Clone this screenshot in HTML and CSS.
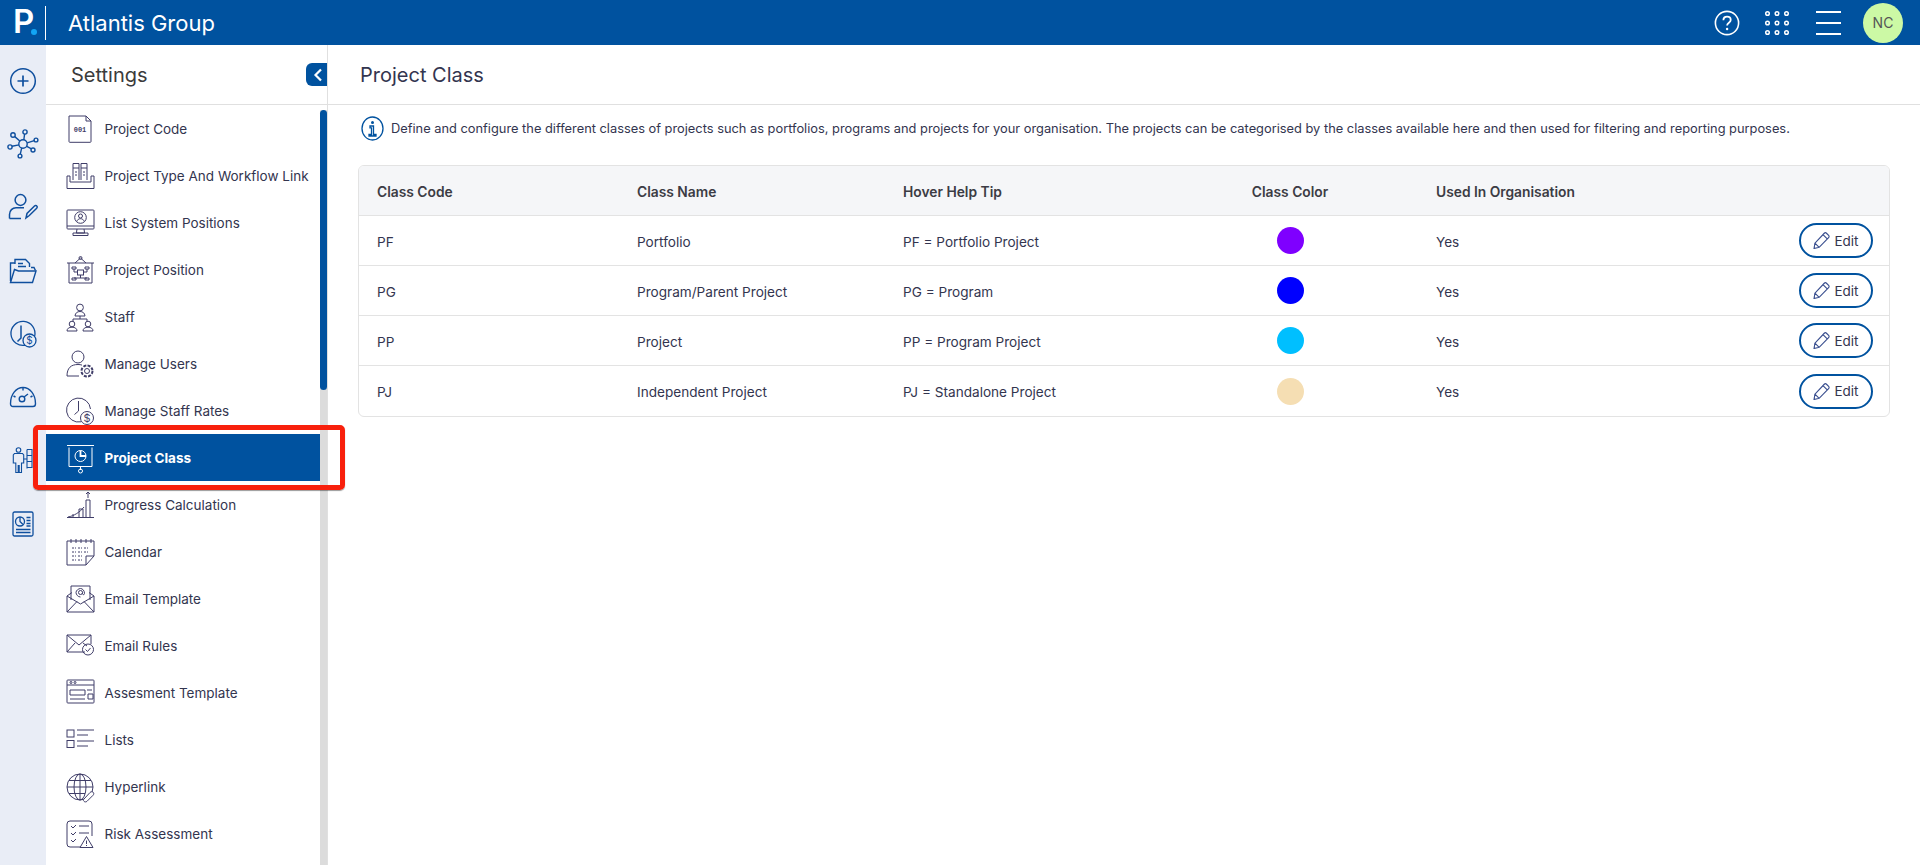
FILE: index.html
```html
<!DOCTYPE html>
<html lang="en">
<head>
<meta charset="utf-8">
<title>Project Class</title>
<link rel="stylesheet" href="styles.css">
</head>
<body>
<svg class="defs" width="0" height="0" aria-hidden="true">
  <symbol id="pencil" viewBox="0 0 16 16"><path d="M1 15.500l.8-5L10.600 1.200c.6-.6 1.500-.6 2.100 0l2 2c.6.600.6 1.500 0 2.100L5.800 14.400zM1.800 10.500l4 3.900M9.400 2.500l4 4" fill="none" stroke="currentColor" stroke-width="1.100"/></symbol>
</svg>
<header class="topbar">
  <div class="logo"><span class="logo-p">P</span><span class="logo-dot"></span></div>
  <div class="logo-sep"></div>
  <div class="org">Atlantis Group</div>
  <div class="top-actions">
    <svg class="ti-help" width="26" height="26" viewBox="0 0 26 26"><circle cx="13" cy="13" r="11.600" fill="none" stroke="#fff" stroke-width="1.600"/><path d="M9.400 10.200c0-2.200 1.700-3.500 3.700-3.500s3.600 1.300 3.600 3.300c0 2.800-3.600 2.800-3.600 5.600" fill="none" stroke="#fff" stroke-width="1.800"/><circle cx="13.100" cy="19" r="1.200" fill="#fff"/></svg>
    <svg class="ti-dots" width="26" height="26" viewBox="0 0 26 26" fill="none" stroke="#fff" stroke-width="1.500"><circle cx="3.500" cy="3.500" r="1.800"/><circle cx="13" cy="3.500" r="1.800"/><circle cx="22.500" cy="3.500" r="1.800"/><circle cx="3.500" cy="13" r="1.800"/><circle cx="13" cy="13" r="1.800"/><circle cx="22.500" cy="13" r="1.800"/><circle cx="3.500" cy="22.500" r="1.800"/><circle cx="13" cy="22.500" r="1.800"/><circle cx="22.500" cy="22.500" r="1.800"/></svg>
    <div class="ti-menu"><span></span><span></span><span></span></div>
    <div class="avatar">NC</div>
  </div>
</header>
<div class="body">
  <nav class="rail">
    <svg width="28" height="28" viewBox="0 0 28 28" fill="none" stroke="currentColor" stroke-width="1.500"><circle cx="14" cy="14" r="12.300"/><path d="M14 8.500v11M8.500 14h11" stroke-width="1.700"/></svg>
    <svg width="32" height="30" viewBox="0 0 32 30" fill="none" stroke="currentColor" stroke-width="1.400"><circle cx="16" cy="15" r="4.200"/><circle cx="6" cy="6" r="2.200"/><circle cx="18" cy="3" r="2.100"/><circle cx="29" cy="11" r="1.900"/><circle cx="26" cy="21" r="2"/><circle cx="13" cy="27" r="1.900"/><circle cx="3" cy="18" r="2.100"/><path d="M7.800 7.600l5 4.400M17.600 5l-.8 6M27.200 11.600l-7 2.200M24.400 19.800l-5-2.600M13.300 25.100l1.400-6.200M5 17.300l7-1.400"/></svg>
    <svg width="30" height="28" viewBox="0 0 30 28" fill="none" stroke="currentColor" stroke-width="1.500"><circle cx="12.500" cy="7" r="5.400"/><path d="M1.500 25.500v-4c0-4 3-6.800 6.500-6.800h8M1.500 25.500H13"/><path d="M18 25l1-4.500 7.500-7.500c.8-.8 1.800-.6 2.300 0 .6.600.6 1.500-.1 2.200L21.300 22.500z"/></svg>
    <svg width="28" height="26" viewBox="0 0 28 26" fill="none" stroke="currentColor" stroke-width="1.400"><path d="M1.500 23V5h4M6 6V1.500h10.500l4 4V9M9 5.500h5M9 8.500h8"/><path d="M1.500 24.500l4-13 4 1.500h17.500l-3.500 11.500z"/><path d="M22 9.500h3l1.500 3"/></svg>
    <svg width="28" height="28" viewBox="0 0 28 28" fill="none" stroke="currentColor" stroke-width="1.300"><path d="M17 25a12 12 0 1 1 8.600-8.700"/><path d="M12 5.500v12.500l-3.500 3.500" stroke-width="1.500"/><circle cx="20.500" cy="20.500" r="6.500" fill="#e9edf6"/><text class="rail-dollar" x="20.500" y="24" text-anchor="middle">$</text></svg>
    <svg width="28" height="22" viewBox="0 0 28 22" fill="none" stroke="currentColor" stroke-width="1.400"><path d="M4 20.500c-1.500 0-2.500-1-2.500-2.800C1.500 8.500 7 1.500 14 1.500s12.500 7 12.500 16.200c0 1.800-1 2.800-2.500 2.800z"/><circle cx="13" cy="13" r="2.800"/><path d="M15 11l4-3M14 1.500v3M4.500 10l2 1M23.500 10l-2 1"/></svg>
    <svg width="22" height="26" viewBox="0 0 22 26" fill="none" stroke="currentColor" stroke-width="1.100"><circle cx="6.500" cy="3" r="2.300"/><path d="M2.500 6.500h8l1.200 1.500v8h-2.200v9.500h-2.300v-7h-1v7H3.800V16H1.300V8z"/><path d="M11.700 12h3.300M15 2.500v19M15 2.500h5v6h-5M15 8.500h5v6h-5M15 14.500h5v6h-5"/></svg>
    <svg width="22" height="26" viewBox="0 0 22 26" fill="none" stroke="currentColor" stroke-width="1.300"><rect x="1" y="1" width="20" height="24" rx="1.500"/><circle cx="8" cy="10.500" r="4.500"/><path d="M8 6v4.500l3 3"/><path d="M14.500 6.500h4M14.500 9.500h4M14.500 12.500h4M14.500 15h4M4 18.500h14.500M4 21.500h14.500"/></svg>
  </nav>
  <aside class="side">
    <div class="side-head">
      <h2>Settings</h2>
      <button class="collapse" type="button" aria-label="Collapse"><svg width="10" height="14" viewBox="0 0 10 14"><path d="M8 1.500L2.500 7 8 12.500" fill="none" stroke="#fff" stroke-width="2.200"/></svg></button>
    </div>
    <div class="side-scroll">
      <ul class="menu">
        <li class="item"><svg class="mi" viewBox="0 0 28 28"><path d="M3 1h17l5 5v20.500a.8.800 0 0 1-.8.800H3.800a.8.800 0 0 1-.8-.8z"/><path d="M20 1v5h5"/><text class="mi-t" x="14" y="17" text-anchor="middle">001</text></svg><span>Project Code</span></li>
        <li class="item"><svg class="mi" viewBox="0 0 28 28"><path d="M7 18V1.500h6V18M15 18V1.500h6V18M7 6h6M15 6h6M9 10h2M17 10h2M9 13h2M17 13h2"/><path d="M1 14v12.500h27V14h-3v6H4v-6z"/></svg><span>Project Type And Workflow Link</span></li>
        <li class="item"><svg class="mi" viewBox="0 0 28 28"><rect x="1" y="1" width="27" height="19" rx=".8"/><path d="M1 17h27M11 20l-.6 4h8.200l-.6-4M7 26.500h15v-2.500H7z"/><circle cx="14.500" cy="8.500" r="5.800"/><circle cx="14.500" cy="7" r="2"/><path d="M10.800 12.500c.6-2 2-2.800 3.700-2.800s3.100.8 3.700 2.800"/></svg><span>List System Positions</span></li>
        <li class="item"><svg class="mi" viewBox="0 0 28 28"><path d="M1 7h27M3 7v20h23V7M9 7l5.500-5 5.500 5"/><circle cx="14.500" cy="2" r="1.500"/><rect x="11.500" y="14" width="6" height="5"/><path d="M11.500 16H8v-3M6 11h4v2H6zM17.500 16H21v-3M19 11h4v2h-4zM14.500 19v3M8 22h13M6 22h4v2H6zM19 22h4v2h-4z"/></svg><span>Project Position</span></li>
        <li class="item"><svg class="mi" viewBox="0 0 28 28"><circle cx="14" cy="4.500" r="3.400"/><path d="M9 13c.3-3 2.200-4.500 5-4.500s4.700 1.500 5 4.500zM14 13v3M7 18.500V16h14v2.500"/><circle cx="6" cy="21" r="2.800"/><path d="M1 28c0-2.500 2-3.800 5-3.800s5 1.300 5 3.800z"/><circle cx="22" cy="21" r="2.800"/><path d="M17 28c0-2.500 2-3.800 5-3.800s5 1.300 5 3.800z"/></svg><span>Staff</span></li>
        <li class="item"><svg class="mi" viewBox="0 0 28 28"><circle cx="12" cy="7" r="6"/><path d="M1 26c0-8 4-11.500 11-11.500 1.500 0 2.800.2 4 .6M1 26h12"/><circle cx="21" cy="21" r="2.500"/><circle cx="21" cy="21" r="5.500" stroke-dasharray="3 1.300" stroke-width="2"/></svg><span>Manage Users</span></li>
        <li class="item"><svg class="mi" viewBox="0 0 28 28"><path d="M15 24.800A12 12 0 1 1 24.500 12"/><path d="M12.500 4v10l-4 3.500"/><circle cx="21" cy="21" r="6.500"/><text class="mi-d" x="21" y="25" text-anchor="middle">$</text></svg><span>Manage Staff Rates</span></li>
        <li class="item on"><svg class="mi" viewBox="0 0 28 28"><path d="M1 1.500h27M3 3.500v19h23v-19M14.500 22.500V26"/><circle cx="14.500" cy="27" r="2"/><circle cx="14.500" cy="12" r="5.500"/><path d="M14.500 6.500V12h5.500" stroke-width="1.800"/></svg><span>Project Class</span></li>
        <li class="item"><svg class="mi" viewBox="0 0 28 28"><path d="M1 26.500h27M2 26c6-1 12-5 16-10M7 26v-3M13 26v-8h4v8M20 26V9h4v17M22 7V1M20 3l2-2 2 2"/></svg><span>Progress Calculation</span></li>
        <li class="item"><svg class="mi" viewBox="0 0 28 28"><path d="M1 3h27v15l-8 9H1zM28 18h-8v9"/><path d="M5 1v4M10 1v4M15 1v4M20 1v4M25 1v4"/><path d="M6 10h4M12 10h4M18 10h4M6 14h4M12 14h4M18 14h4M6 18h4M12 18h4M6 22h4M12 22h4" stroke-dasharray="2 1"/></svg><span>Calendar</span></li>
        <li class="item"><svg class="mi" viewBox="0 0 28 28"><path d="M1 11v16h27V11l-5-3.500M1 11l5-3.500M1 11l13.500 8L28 11M1 27l10-10.500M28 27L18 16.500"/><path d="M5 15V1h19v14"/><circle cx="14.500" cy="7.500" r="2"/><path d="M16.500 7.500v1c0 1.500 2 1.500 2 0 0-3-2-5-4-5s-4.500 2-4.500 4 2 4.500 4.500 4.500"/></svg><span>Email Template</span></li>
        <li class="item"><svg class="mi" viewBox="0 0 28 28"><path d="M19 20H1V3h24v9M1 3l12 10 12-10M1 20l8-9M17 11l4 3"/><circle cx="22" cy="17.500" r="5.500"/><path d="M19.500 17.500l2 2 3-3.500"/></svg><span>Email Rules</span></li>
        <li class="item"><svg class="mi" viewBox="0 0 28 28"><rect x="1" y="1" width="27" height="23" rx=".8"/><path d="M1 6h27M4 11h15v5H4zM4 20h15M21 11h5M22 15h5v5h-5z"/><circle cx="5" cy="3.500" r="1"/><circle cx="9" cy="3.500" r="1"/></svg><span>Assesment Template</span></li>
        <li class="item"><svg class="mi" viewBox="0 0 28 28"><rect x="1" y="4" width="7" height="7"/><rect x="1" y="14.500" width="7" height="7"/><path d="M11 4h17M11 9h11M11 15h17M11 20h11"/></svg><span>Lists</span></li>
        <li class="item"><svg class="mi" viewBox="0 0 28 28"><circle cx="14" cy="14" r="13"/><ellipse cx="14" cy="14" rx="6" ry="13"/><path d="M14 1v26M1 14h26M3 7.500h22M3 20.500h16"/><path d="M18 26l6-6.500c1-1 2.400-1 3.200-.2s.8 2-.2 3l-6 6c-1 .8-2.200.8-3 0s-.8-1.500 0-2.300z" fill="#fff"/></svg><span>Hyperlink</span></li>
        <li class="item"><svg class="mi" viewBox="0 0 28 28"><path d="M14 27H4a3 3 0 0 1-3-3V4a3 3 0 0 1 3-3h19a3 3 0 0 1 3 3v12"/><path d="M5 6l2 2 3-3M5 13l2 2 3-3M5 20l2 2 3-3M13 6h10M13 13h10"/><path d="M14 27.500l6.500-11 6.500 11zM20.500 20.500v3.500M20.500 25v1"/></svg><span>Risk Assessment</span></li>
      </ul>
      <div class="bar"><div class="thumb"></div></div>
    </div>
  </aside>
  <main class="main">
    <div class="main-head"><h1>Project Class</h1></div>
    <p class="desc">
      <svg width="23" height="25" viewBox="0 0 23 25" fill="none" stroke="#00529f" stroke-width="1.300"><ellipse cx="11.500" cy="12.500" rx="10.500" ry="11.500"/><circle cx="11.500" cy="6.500" r="1.500" fill="#00529f" stroke="none"/><path d="M9 10h3.500v8.500h2.500V20H8v-1.500h2.500v-6.700H9z"/></svg>
      <span>Define and configure the different classes of projects such as portfolios, programs and projects for your organisation. The projects can be categorised by the classes available here and then used for filtering and reporting purposes.</span>
    </p>
    <div class="tbl-wrap">
      <table class="tbl">
        <colgroup><col class="c1"><col class="c2"><col class="c3"><col class="c4"><col class="c5"><col></colgroup>
        <thead><tr><th>Class Code</th><th>Class Name</th><th>Hover Help Tip</th><th class="ctr">Class Color</th><th>Used In Organisation</th><th></th></tr></thead>
        <tbody>
          <tr><td>PF</td><td>Portfolio</td><td>PF = Portfolio Project</td><td class="ctr"><span class="dot" style="background:#7f00ff"></span></td><td>Yes</td><td class="act"><button class="edit" type="button"><svg width="17" height="17"><use href="#pencil"/></svg>Edit</button></td></tr>
          <tr><td>PG</td><td>Program/Parent Project</td><td>PG = Program</td><td class="ctr"><span class="dot" style="background:#0000ff"></span></td><td>Yes</td><td class="act"><button class="edit" type="button"><svg width="17" height="17"><use href="#pencil"/></svg>Edit</button></td></tr>
          <tr><td>PP</td><td>Project</td><td>PP = Program Project</td><td class="ctr"><span class="dot" style="background:#00bfff"></span></td><td>Yes</td><td class="act"><button class="edit" type="button"><svg width="17" height="17"><use href="#pencil"/></svg>Edit</button></td></tr>
          <tr><td>PJ</td><td>Independent Project</td><td>PJ = Standalone Project</td><td class="ctr"><span class="dot" style="background:#f5deb3"></span></td><td>Yes</td><td class="act"><button class="edit" type="button"><svg width="17" height="17"><use href="#pencil"/></svg>Edit</button></td></tr>
        </tbody>
      </table>
    </div>
  </main>
</div>
<div class="redbox"></div>
</body>
</html>
```
FILE: styles.css
```css
* { box-sizing: border-box; }
html, body { margin: 0; height: 100%; }
body { font-family: Inter, "Liberation Sans", sans-serif; color: #33354f; background: #fff; overflow: hidden; position: relative; }
.defs { position: absolute; }
.topbar { height: 45px; background: #00529f; display: flex; align-items: center; color: #fff; }
.logo { width: 45px; height: 45px; position: relative; flex: none; }
.logo-p { position: absolute; left: 13px; top: 1px; font: 600 33px/40px Inter, sans-serif; color: #fff; }
.logo-dot { position: absolute; left: 31px; top: 29px; width: 6px; height: 6px; border-radius: 50%; background: #12a5f4; }
.logo-sep { width: 1px; height: 34px; background: #fff; flex: none; }
.org { margin-left: 22px; font-size: 22px; font-weight: 400; }
.top-actions { margin-left: auto; display: flex; align-items: center; padding-right: 17px; }
.ti-help { margin-right: 24px; }
.ti-dots { margin-right: 26px; }
.ti-menu { width: 25px; height: 24px; display: flex; flex-direction: column; justify-content: space-between; margin-right: 22px; }
.ti-menu span { display: block; height: 2px; background: #fff; }
.avatar { width: 40px; height: 40px; border-radius: 50%; background: #ccf9a5; color: #555; font-size: 14px; display: flex; align-items: center; justify-content: center; }
.body { display: flex; height: 820px; }
.rail { width: 46px; flex: none; background: #e9edf6; color: #0f4f9e; display: grid; grid-auto-rows: 63.300px; place-items: center; align-content: start; padding-top: 4px; }
.rail-dollar { font: 400 10px Inter, sans-serif; fill: currentColor; stroke: none; }
.side { width: 282px; flex: none; border-right: 1px solid #e0e0e0; display: flex; flex-direction: column; }
.side-head { height: 60px; flex: none; border-bottom: 1px solid #e0e0e0; display: flex; align-items: center; justify-content: space-between; padding-left: 25px; }
.side-head h2 { margin: 0; font-size: 20px; font-weight: 400; color: #3b3b3b; }
.collapse { width: 21px; height: 23px; padding: 0 0 0 3px; border: 0; background: #00529f; border-radius: 6px 0 0 6px; display: flex; align-items: center; justify-content: center; }
.side-scroll { flex: 1; display: flex; min-height: 0; overflow: hidden; }
.menu { list-style: none; margin: 0; padding: 0; width: 274px; flex: none; }
.item { height: 47px; display: flex; align-items: center; padding-left: 20px; font-size: 13.500px; color: #33354f; }
.item span { margin-left: 10.500px; position: relative; top: .5px; white-space: nowrap; }
.item.on { background: #00529f; color: #fff; font-weight: 700; }
.item.on .mi { stroke: #fff; }
.mi { width: 28px; height: 28px; flex: none; fill: none; stroke: #3f3d68; stroke-width: 1; overflow: visible; }
.mi-t { font: 700 7px "Liberation Mono", monospace; fill: #3f3d68; stroke: none; }
.mi-d { font: 400 11px Inter, sans-serif; fill: #3f3d68; stroke: none; }
.bar { width: 7px; flex: none; margin-top: 5px; background: #dcdcdc; }
.thumb { height: 280px; background: #00529f; border-radius: 4px; }
.main { flex: 1; min-width: 0; }
.main-head { height: 60px; border-bottom: 1px solid #e0e0e0; display: flex; align-items: center; padding-left: 32px; }
.main-head h1 { margin: 0; font-size: 20px; font-weight: 400; color: #33354f; }
.desc { margin: 0; height: 46px; display: flex; align-items: center; padding-left: 33px; font-size: 12.840px; color: #33354f; gap: 7px; }
.desc svg { flex: none; }
.tbl-wrap { margin: 14px 30px 0 30px; border: 1px solid #e3e3e3; border-radius: 6px; overflow: hidden; }
.tbl { width: 100%; border-collapse: separate; border-spacing: 0; table-layout: fixed; font-size: 13.600px; }
.c1 { width: 260px; } .c2 { width: 266px; } .c3 { width: 277px; } .c4 { width: 256px; } .c5 { width: 282px; }
.tbl th { height: 50px; background: #f5f6f8; text-align: left; font-weight: 600; font-size: 13.800px; color: #3c3c44; padding: 2px 18px 0; border-bottom: 1px solid #e3e3e3; }
.tbl td { height: 50px; padding: 2px 18px 0; border-bottom: 1px solid #e3e3e3; color: #33354f; }
.tbl tr:last-child td { border-bottom: 0; }
.tbl .ctr { text-align: center; }
.tbl td.ctr { padding-top: 0; }
.dot { display: block; width: 27px; height: 27px; border-radius: 50%; margin: 0 auto; }
.tbl td.act { text-align: right; padding: 0 16px 0 0; }
.edit { display: inline-flex; vertical-align: middle; align-items: center; justify-content: center; gap: 4px; width: 74px; height: 35px; border: 2px solid #00529f; border-radius: 18px; background: #fff; color: #33354f; font: 400 13.500px Inter, sans-serif; padding: 0; }
.edit svg { color: #3a4f8f; }
.redbox { position: absolute; left: 33px; top: 425px; width: 312px; height: 65px; border: 5px solid #f8200c; border-radius: 5px; box-shadow: 0 1px 1px rgba(0,0,0,.4); pointer-events: none; }
```
